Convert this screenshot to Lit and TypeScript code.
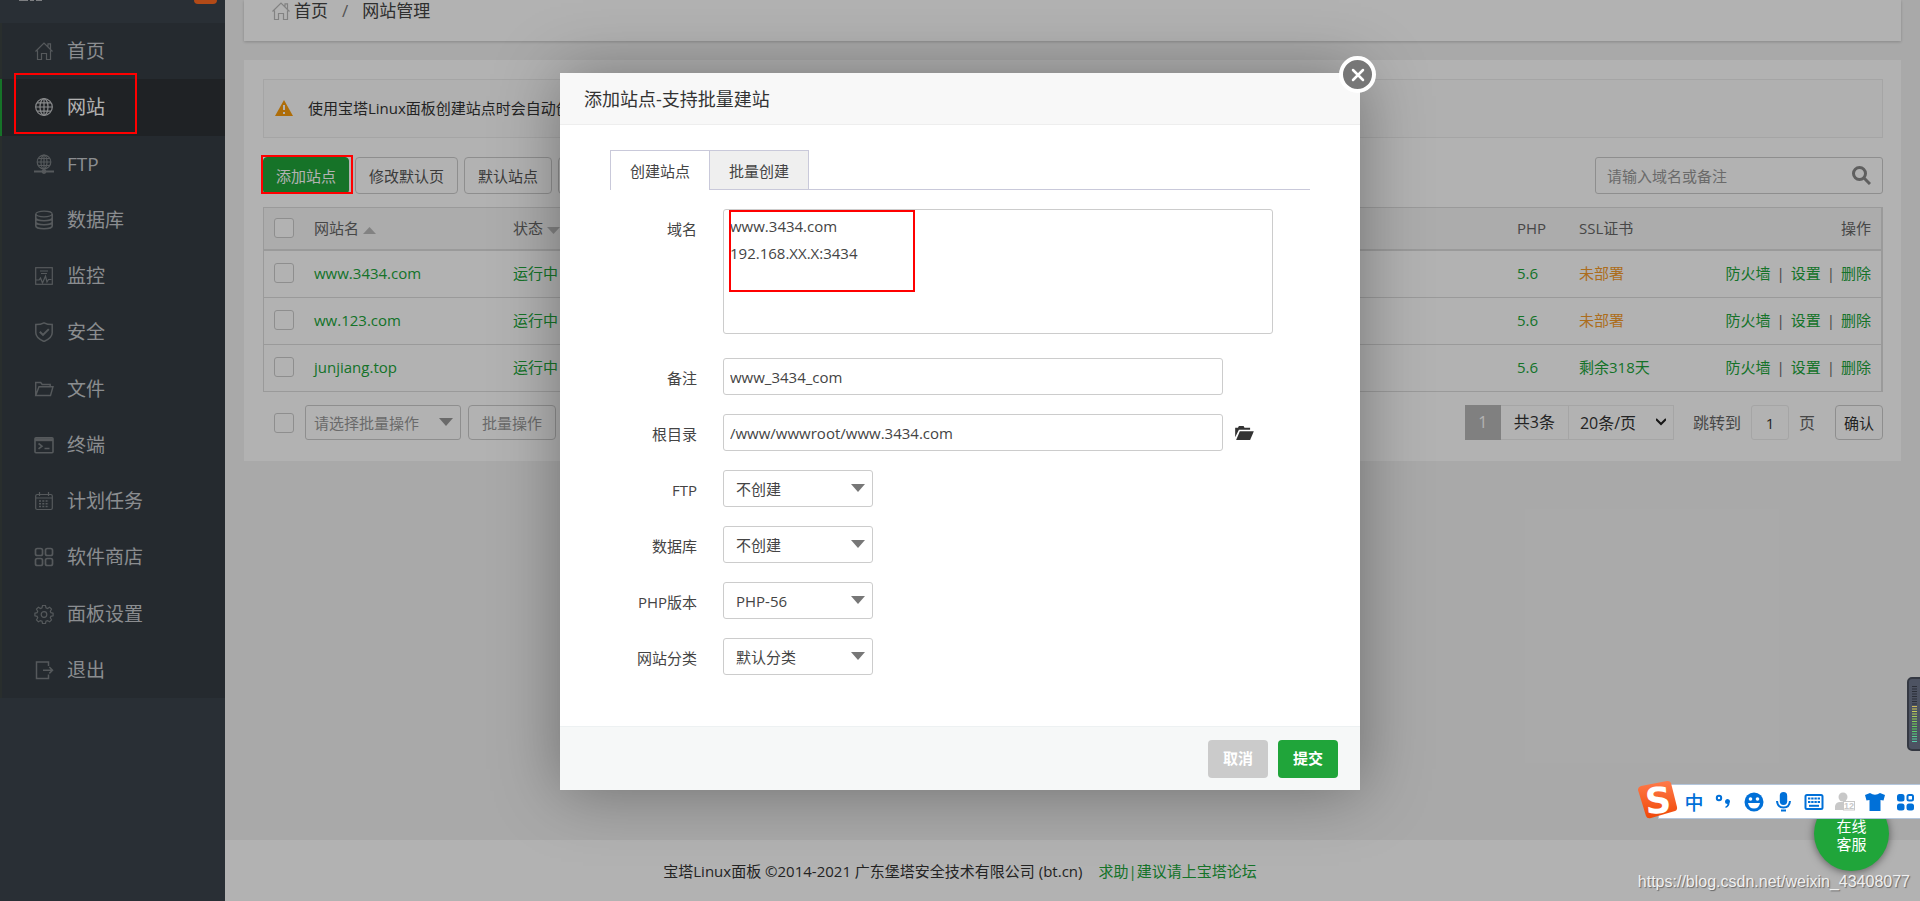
import { LitElement, html, svg, css } from "lit";
import { customElement, state } from "lit/decorators.js";
import { classMap } from "lit/directives/class-map.js";

const icons: Record<string, unknown> = {
  home: svg`<path d="M1.500 10.500 10 2l8.500 8.500M14 6V2.800h2.500V8.500M3.500 9.500v9h4v-6h5v6h4v-9"/>`,
  globe: svg`<circle cx="10" cy="10" r="8.300"/><ellipse cx="10" cy="10" rx="4" ry="8.300"/><path d="M10 1.700v16.600M1.700 10h16.600M3 5.800h14M3 14.200h14"/>`,
  ftp: svg`<circle cx="10" cy="8" r="6.800"/><ellipse cx="10" cy="8" rx="3" ry="6.800"/><path d="M10 1v14M3.200 8h13.600M4.500 4.500h11M4.500 11.500h11"/><path d="M0 17.500h20" stroke-width="2"/><circle cx="10" cy="17.500" r="1.800" fill="currentColor"/>`,
  database: svg`<ellipse cx="10" cy="4" rx="8.200" ry="2.800"/><path d="M1.800 4v12c0 1.600 3.600 2.800 8.200 2.800s8.200-1.200 8.200-2.800V4M1.800 8c0 1.600 3.600 2.800 8.200 2.800S18.200 9.600 18.200 8M1.800 12c0 1.600 3.600 2.800 8.200 2.800s8.200-1.200 8.200-2.800" stroke-width="1.600"/>`,
  monitor: svg`<rect x="1.700" y="1.700" width="16.600" height="16.600"/><path d="M6 5h8M7 7.500h6M2 14h3l1.500-2L8.500 17l3-7 1.500 6 1.500-2.500h3"/>`,
  shield: svg`<path d="M10 .8c2.500 1.400 5 1.800 8.200 1.800v8.200c0 4-3.600 6.700-8.200 8.700-4.600-2-8.200-4.700-8.200-8.700V2.600C5 2.600 7.500 2.200 10 .8z" stroke-width="1.500"/><path d="m5.800 9.700 3.200 3.200 5.800-5.800" stroke-width="2"/>`,
  folder: svg`<path d="M1.700 16.500V3.500h5l1.500 2h8v2.500M1.700 16.500 5 7.800h14l-2.500 8.700z" stroke-width="1.400"/>`,
  terminal: svg`<rect x="1" y="2.700" width="18" height="15" rx="1" stroke-width="1.600"/><path d="M1 4.700h18" stroke-width="3"/><path d="m4.500 8.500 3.500 2.700-3.500 2.700M10.500 13.500h5" stroke-width="1.600"/>`,
  calendar: svg`<rect x="1.700" y="3.500" width="16.600" height="15" rx="1.500"/><path d="M5.500 1v4M14.500 1v4M2 7h16"/><path d="M5 10h10M5 12.800h10M5 15.500h10" stroke-dasharray="2 1.300" stroke-width="1.600"/>`,
  apps: svg`<g stroke-width="1.700"><rect x="1.500" y="1.500" width="7" height="7" rx="1.800"/><rect x="11.500" y="1.500" width="7" height="7" rx="1.800"/><rect x="1.500" y="11.500" width="7" height="7" rx="1.800"/><rect x="11.500" y="11.500" width="7" height="7" rx="1.800"/></g>`,
  gear: svg`<path d="M8.500 1.500h3l.5 2.300 1.500.7 2.100-1.300 1.900 2-1.200 2 .6 1.500 2.200.5v2.600l-2.200.5-.6 1.500 1.200 2-1.900 2-2.100-1.200-1.500.6-.5 2.300h-3L8 17.200l-1.500-.6-2.100 1.200-1.900-2 1.200-2-.6-1.500-2.200-.5V9.200l2.200-.5.6-1.500-1.200-2 1.900-2 2.100 1.300L8 3.800z"/><circle cx="10" cy="10.500" r="2.800"/>`,
  exit: svg`<path d="M14.500 6V2H2.500v16.500h12v-4M9 10.200h9M15.300 7l3.200 3.200-3.200 3.200" stroke-width="1.500"/>`,
};

const icon = (name: string) =>
  html`<svg class="icon" viewBox="0 0 20 20" width="20" height="20" aria-hidden="true">${icons[name]}</svg>`;

const menu = [
  { icon: "home", label: "首页" },
  { icon: "globe", label: "网站" },
  { icon: "ftp", label: "FTP" },
  { icon: "database", label: "数据库" },
  { icon: "monitor", label: "监控" },
  { icon: "shield", label: "安全" },
  { icon: "folder", label: "文件" },
  { icon: "terminal", label: "终端" },
  { icon: "calendar", label: "计划任务" },
  { icon: "apps", label: "软件商店" },
  { icon: "gear", label: "面板设置" },
  { icon: "exit", label: "退出" },
];

const sites = [
  { name: "www.3434.com", php: "5.6", ssl: "未部署", secured: false },
  { name: "ww.123.com", php: "5.6", ssl: "未部署", secured: false },
  { name: "junjiang.top", php: "5.6", ssl: "剩余318天", secured: true },
];

const selects = [
  { id: "ftp", label: "FTP", value: "不创建" },
  { id: "db", label: "数据库", value: "不创建" },
  { id: "php", label: "PHP版本", value: "PHP-56" },
  { id: "type", label: "网站分类", value: "默认分类" },
];

const shared = css`
  * { box-sizing: border-box; }
  button, input, select, textarea { font: inherit; color: inherit; margin: 0; outline: none; }
  a { text-decoration: none; color: inherit; }
  .icon { fill: none; stroke: currentColor; stroke-width: 1.2; flex: none; }
  .select { position: relative; display: flex; }
  .select select { appearance: none; width: 100%; background: #fff; border: 1px solid #ccc; border-radius: 3px; }
  .select svg { position: absolute; right: 8px; top: 50%; margin-top: -5px; pointer-events: none; }
`;

@customElement("bt-sidebar")
export class BtSidebar extends LitElement {
  @state() private active = "网站";

  static styles = [shared, css`
    :host { display: flex; flex-direction: column; width: 225px; flex: none; background: #3c444d; color: #c8cbcf; font-size: 19px; }
    .top { display: flex; justify-content: space-between; height: 23px; padding: 0 8px 0 18px; }
    .top svg { display: block; }
    .badge { width: 23px; height: 4px; border-radius: 0 0 8px 8px; background: #ff6b22; }
    nav { display: flex; flex-direction: column; height: 675px; background: #353d44; }
    a { flex: 1; display: flex; align-items: center; gap: 13px; padding-left: 32px; border-left: 2px solid #3c4341; line-height: 28px; }
    .icon { color: #7b8084; }
    .active { background: #2d3136; border-left-color: #20a53a; color: #fff; }
    .active .icon { color: #c4c6c8; }
  `];

  render() {
    return html`
      <div class="top">
        <svg width="26" height="2" aria-hidden="true"><path d="M1 0h9v1H1zM12 0h4v1h-4zM18 0h6v1h-6z" fill="#b4b7ba"/></svg>
        <span class="badge"></span>
      </div>
      <nav>
        ${menu.map(m => html`<a href="#" class=${classMap({ active: m.label === this.active })}
          @click=${(e: Event) => { e.preventDefault(); this.active = m.label; }}>${icon(m.icon)}<span>${m.label}</span></a>`)}
      </nav>`;
  }
}

@customElement("bt-sites")
export class BtSites extends LitElement {
  static styles = [shared, css`
    :host { flex: 1; min-width: 0; display: flex; flex-direction: column; background: #f3f3f3; color: #666; font-size: 15px; line-height: 20px; }
    .crumbs { display: flex; align-items: center; height: 41px; margin: 0 19px; padding: 0 27px 20px; background: #fff; box-shadow: 0 1px 3px rgba(0, 0, 0, .2); font-size: 17px; color: #444; }
    .crumbs .icon { color: #bbb; margin-right: 3px; }
    .crumbs i { font-style: normal; margin: 0 14px; color: #777; }
    .card { margin: 19px; padding: 19px 18px 21px 19px; background: #fff; }
    .alert { display: flex; align-items: center; gap: 15px; height: 59px; padding: 0 11px 2px; border: 1px solid #ececec; background: #fcfcfc; color: #333; }
    .bar { display: flex; align-items: center; gap: 6px; margin-top: 19px; height: 37px; }
    .btn { height: 37px; padding: 0 13px; border: 1px solid #ccc; border-radius: 4px; background: #fff; color: #555; white-space: nowrap; }
    .primary { padding: 0 12px; background: #20a53a; border-color: #20a53a; color: #fff; }
    .search { display: flex; align-items: center; margin-left: auto; width: 288px; height: 37px; padding: 0 11px; border: 1px solid #ccc; border-radius: 3px; color: #8a8a8a; }
    .search input { flex: 1; min-width: 0; border: 0; padding: 0; background: none; }
    .search input::placeholder { color: #999; }
    .search button { display: flex; padding: 0; border: 0; background: none; }
    table { width: 100%; margin-top: 13px; table-layout: fixed; border: 1px solid #ddd; border-right-width: 2px; border-spacing: 0; }
    th, td { height: 47px; padding: 0 10px 2px; text-align: left; font-weight: 400; border-bottom: 1px solid #ddd; white-space: nowrap; }
    th { height: 43px; padding-bottom: 1px; background: #f6f6f6; border-bottom-width: 2px; }
    tbody tr:last-child td { border-bottom: 0; height: 46px; }
    .c-check { width: 40px; } .c-name { width: 199px; } .c-php { width: 62px; } .c-ssl { width: 108px; } .c-ops { width: 204px; }
    .right { text-align: right; }
    .right i { font-style: normal; margin: 0 6px; }
    .green { color: #20a53a; }
    .orange { color: #f79d2b; }
    input[type="checkbox"] { display: block; appearance: none; width: 20px; height: 20px; border: 1px solid #ccc; border-radius: 3px; background: #fff; }
    .foot { display: flex; align-items: center; height: 35px; margin-top: 13px; padding-left: 11px; }
    .foot .btn { height: 35px; color: #999; }
    .batch { width: 156px; margin: 0 7px 0 11px; color: #999; }
    .batch select { height: 35px; padding: 0 8px; }
    .pages { display: flex; align-items: center; margin-left: auto; color: #333; font-size: 16px; }
    .page { width: 36px; height: 35px; line-height: 35px; text-align: center; background: #b8b8b8; color: #fff; }
    .total { height: 35px; line-height: 33px; padding: 0 13px; border: 1px solid #ececec; border-left: 0; }
    .size { width: 106px; margin-left: -1px; }
    .size select { height: 35px; padding: 0 11px; border-color: #ececec; border-radius: 0; }
    .pages label { display: flex; align-items: center; gap: 10px; margin: 0 20px 0 19px; color: #666; }
    .pages label input { width: 38px; height: 35px; padding: 0; border: 1px solid #ececec; border-radius: 3px; text-align: center; font-size: 15px; color: #333; }
    .foot .ok { padding: 0 8px; color: #333; font-size: 15px; }
    footer { display: flex; justify-content: center; gap: 16px; margin-top: auto; height: 61px; padding: 21px 225px 0 0; background: #fff; color: #333; }
  `];

  render() {
    return html`
      <div class="crumbs">${icon("home")}<a href="#">首页</a><i>/</i><span>网站管理</span></div>
      <section class="card">
        <div class="alert">
          <svg width="18" height="16" viewBox="0 0 18 16" aria-hidden="true"><path d="M9 0l9 16H0z" fill="#fa9d0e"/><path d="M8 5h2v5H8zM8 12h2v2H8z" fill="#fff"/></svg>
          <span>使用宝塔Linux面板创建站点时会自动创建</span>
        </div>
        <div class="bar">
          <button class="btn primary">添加站点</button>
          <button class="btn">修改默认页</button>
          <button class="btn">默认站点</button>
          <button class="btn">分类管理</button>
          <div class="search">
            <input type="text" placeholder="请输入域名或备注" aria-label="请输入域名或备注">
            <button aria-label="搜索"><svg width="19" height="19" viewBox="0 0 19 19" fill="none" stroke="#888" stroke-width="3"><circle cx="7.500" cy="7.500" r="6"/><path d="M12 12l6 6"/></svg></button>
          </div>
        </div>
        <table>
          <colgroup><col class="c-check"><col class="c-name"><col><col class="c-php"><col class="c-ssl"><col class="c-ops"></colgroup>
          <thead><tr>
            <th><input type="checkbox" aria-label="全选"></th>
            <th>网站名 <svg width="13" height="7" aria-hidden="true"><path d="M0 7L6.500 0L13 7z" fill="#bbb"/></svg></th>
            <th>状态 <svg width="13" height="7" aria-hidden="true"><path d="M0 0h13L6.500 7z" fill="#bbb"/></svg></th>
            <th>PHP</th><th>SSL证书</th><th class="right">操作</th>
          </tr></thead>
          <tbody>
            ${sites.map(s => html`<tr>
              <td><input type="checkbox" aria-label=${s.name}></td>
              <td><a class="green" href="#">${s.name}</a></td>
              <td><a class="green" href="#">运行中</a></td>
              <td><a class="green" href="#">${s.php}</a></td>
              <td><a class=${s.secured ? "green" : "orange"} href="#">${s.ssl}</a></td>
              <td class="right"><a class="green" href="#">防火墙</a><i>|</i><a class="green" href="#">设置</a><i>|</i><a class="green" href="#">删除</a></td>
            </tr>`)}
          </tbody>
        </table>
        <div class="foot">
          <input type="checkbox" aria-label="全选">
          <span class="select batch"><select aria-label="批量操作"><option>请选择批量操作</option></select>
            <svg width="14" height="8" aria-hidden="true"><path d="M0 0h14L7 8z" fill="#999"/></svg></span>
          <button class="btn">批量操作</button>
          <div class="pages">
            <span class="page">1</span><span class="total">共3条</span>
            <span class="select size"><select aria-label="每页条数"><option>20条/页</option></select>
              <svg width="10" height="8" viewBox="0 0 10 8" fill="none" stroke="#222" stroke-width="2" aria-hidden="true"><path d="M0 1l5 5 5-5"/></svg></span>
            <label>跳转到<input type="text" value="1">页</label>
            <button class="btn ok">确认</button>
          </div>
        </div>
      </section>
      <footer><span>宝塔Linux面板 ©2014-2021 广东堡塔安全技术有限公司 (bt.cn)</span><a class="green" href="#">求助|建议请上宝塔论坛</a></footer>`;
  }
}

@customElement("bt-dialog")
export class BtDialog extends LitElement {
  static styles = [shared, css`
    :host { position: relative; display: block; width: 800px; background: #fff; color: #444; font-size: 15px; line-height: 20px; box-shadow: 1px 1px 62px rgba(0, 0, 0, .35); }
    h2 { margin: 0; height: 52px; padding: 0 24px; line-height: 53px; font-size: 18px; font-weight: 400; color: #333; background: #f8f8f8; border-bottom: 1px solid #eee; }
    .close { position: absolute; right: -16px; top: -17px; width: 37px; height: 37px; padding: 0; border: 4px solid #fff; border-radius: 50%; background: #777; display: grid; place-items: center; }
    .body { padding: 25px 50px 51px; }
    .tabs { display: flex; height: 40px; margin-bottom: 19px; border-bottom: 1px solid #c9c9da; }
    .tab { height: 39px; padding: 1px 19px 0; border: 1px solid #c9c9da; border-bottom: 0; background: #efefef; }
    .tab + .tab { border-left: 0; }
    .tab.on { height: 40px; background: #fff; }
    form { display: grid; gap: 19px; }
    .row { display: flex; align-items: center; gap: 26px; }
    .row > label { width: 87px; text-align: right; padding-top: 3px; }
    .row.first { align-items: flex-start; margin-bottom: 5px; }
    .row.first > label { padding-top: 10px; }
    .row input, textarea { border: 1px solid #ccc; border-radius: 3px; background: #fff; }
    textarea { width: 550px; height: 125px; padding: 3px 6px; line-height: 27px; resize: none; }
    .row input { width: 500px; height: 37px; padding: 0 6px; }
    .select { width: 150px; }
    .select select { height: 37px; padding: 0 12px; }
    .pick { margin-left: -14px; padding: 0; border: 0; background: none; display: flex; }
    .actions { display: flex; justify-content: flex-end; gap: 10px; height: 64px; padding: 13px 22px; border-top: 1px solid #edf1f2; background: #f6f8f8; }
    .actions button { width: 60px; height: 38px; padding: 0 0 3px; border: 0; border-radius: 4px; font-weight: 700; color: #fff; background: #cbcbcb; }
    .actions .submit { background: #20a53a; }
  `];

  render() {
    return html`
      <h2>添加站点-支持批量建站</h2>
      <button class="close" aria-label="关闭"><svg width="14" height="14" viewBox="0 0 14 14" stroke="#fff" stroke-width="2.500" stroke-linecap="round"><path d="M2 2l10 10M12 2L2 12"/></svg></button>
      <div class="body">
        <div class="tabs"><button class="tab on">创建站点</button><button class="tab">批量创建</button></div>
        <form>
          <div class="row first"><label for="domain">域名</label><textarea id="domain" .value=${"www.3434.com\n192.168.XX.X:3434"}></textarea></div>
          <div class="row"><label for="note">备注</label><input id="note" type="text" value="www_3434_com"></div>
          <div class="row"><label for="root">根目录</label><input id="root" type="text" value="/www/wwwroot/www.3434.com">
            <button class="pick" type="button" aria-label="选择目录"><svg width="19" height="14" viewBox="0 0 20 15" fill="#333"><path d="M0 12V2h3l1-2h5l1 2h6v2H4z"/><path d="M5 5.500h15L16 15H1z"/></svg></button></div>
          ${selects.map(s => html`<div class="row"><label for=${s.id}>${s.label}</label>
            <span class="select"><select id=${s.id}><option>${s.value}</option></select>
            <svg width="14" height="8" aria-hidden="true"><path d="M0 0h14L7 8z" fill="#777"/></svg></span></div>`)}
        </form>
      </div>
      <div class="actions"><button>取消</button><button class="submit">提交</button></div>`;
  }
}

@customElement("ime-bar")
export class ImeBar extends LitElement {
  static styles = css`
    :host { display: flex; align-items: center; height: 33px; background: #fff; border: 1px solid #b4c6dc; border-right: 0; color: #0070d8; }
    svg { flex: none; display: block; overflow: visible; fill: #0070d8; }
    .logo { margin: -6px 1px -1px -21px; }
    .mark { font: 700 36px "DejaVu Sans", sans-serif; fill: #fff; }
    .cn { width: 30px; text-align: center; font: 500 19px/30px "Noto Sans CJK SC", sans-serif; }
    .num { font: 700 9px "Liberation Sans", sans-serif; fill: #c8c8c8; }
    .line { fill: none; stroke: #0070d8; stroke-width: 2; }
    .dim { fill: #c8c8c8; }
    .white { fill: #fff; }
  `;

  render() {
    return html`
      <svg class="logo" width="40" height="39" viewBox="0 0 40 39" role="img" aria-label="S">
        <defs><linearGradient id="g" x2="0" y2="1"><stop stop-color="#ff7a4a"/><stop offset="1" stop-color="#f04808"/></linearGradient></defs>
        <path d="M3 6L29 1q3-.5 4 2l6 24q.5 3-2 4L13 38q-4 1-5-2L0 10q0-3 3-4z" fill="url(#g)"/>
        <text class="mark" x="7" y="33" transform="rotate(-4 20 20)">S</text>
      </svg>
      <span class="cn">中</span>
      <svg width="30" height="30" viewBox="0 0 30 30"><circle class="line" cx="10" cy="11" r="2.200"/><path d="M16 14.500a2.500 2.500 0 1 1 4.500 1.500q0 3.500-4 5v-1.500q1.800-1 2-2.500-2.500 0-2.500-2.500z"/></svg>
      <svg width="30" height="30" viewBox="0 0 30 30"><circle cx="15" cy="15" r="9.500"/><g class="white"><circle cx="11.500" cy="12" r="1.800"/><circle cx="18.500" cy="12" r="1.800"/><path d="M9 16h12q-1 5.500-6 5.500T9 16z"/></g></svg>
      <svg width="30" height="30" viewBox="0 0 30 30"><rect x="10.800" y="5" width="7.400" height="13" rx="3.700"/><path class="line" d="M8 14q.5 6.500 6.500 6.500T21 14"/><path d="M12 22.500h5v2h-5z"/></svg>
      <svg width="30" height="30" viewBox="0 0 30 30"><rect class="line" x="6.500" y="8" width="17" height="14" rx="1.500"/><path class="line" d="M9 11.500h12M9 15h12" stroke-dasharray="2.400 .8"/><path class="line" d="M10 18.800h10"/></svg>
      <svg width="31" height="30" viewBox="0 0 31 30"><circle class="dim" cx="14" cy="10" r="4.500"/><path class="dim" d="M6 23v-4q1-4 5-4h6q2 0 2 1h-5v7z"/><rect x="14.500" y="14.500" width="11" height="8.500" fill="#fff" stroke="#c8c8c8"/><text class="num" x="15" y="22">12</text></svg>
      <svg width="30" height="30" viewBox="0 0 30 30"><path d="M10 6q5 3.500 10 0l5 2-1.500 5.500-3-.5v11h-11V13l-3 .5L5 8z"/></svg>
      <svg width="30" height="30" viewBox="0 0 30 30"><rect x="7" y="7" width="7.500" height="7.500" rx="2.500"/><rect class="line" x="17.500" y="8" width="5.500" height="5.500" rx="1.500"/><rect x="7" y="16.500" width="7.500" height="7" rx="2.500"/><rect x="16.500" y="16.500" width="7.500" height="7" rx="2.500"/></svg>`;
  }
}

@customElement("app-root")
export class AppRoot extends LitElement {
  static styles = css`
    :host { position: relative; display: flex; min-height: 100vh; overflow: hidden; font-family: "Open Sans", "Noto Sans CJK SC", sans-serif; }
    .mask { position: absolute; inset: 0; background: rgba(0, 0, 0, .3); display: flex; justify-content: center; align-items: flex-start; padding-top: 73px; }
    .mark { position: absolute; border: 2px solid #f00; pointer-events: none; box-sizing: border-box; }
    .m-nav { left: 14px; top: 73px; width: 123px; height: 61px; }
    .m-add { left: 261px; top: 155px; width: 92px; height: 39px; }
    .frame { position: relative; }
    .m-domain { left: 169px; top: 137px; width: 186px; height: 82px; }
    .help { position: absolute; right: 31px; bottom: 30px; width: 75px; height: 75px; padding: 21px 20px 0; box-sizing: border-box; border-radius: 50%; background: #20a53a; color: #fff; font-size: 15px; line-height: 18px; text-align: center; text-decoration: none; box-shadow: 0 1px 8px rgba(0, 0, 0, .5); }
    ime-bar { position: absolute; right: 0; bottom: 82px; }
    .meter { position: absolute; right: 0; bottom: 150px; }
    .watermark { position: absolute; right: 10px; bottom: 9px; font: 16px/20px "Liberation Sans", sans-serif; color: #f0f0f0; text-shadow: 1px 1px 1px #666; }
  `;

  render() {
    const ticks = Array.from({ length: 23 }, (_, i) => i);
    return html`
      <bt-sidebar></bt-sidebar>
      <bt-sites></bt-sites>
      <div class="mask"><div class="frame"><bt-dialog></bt-dialog><span class="mark m-domain"></span></div></div>
      <span class="mark m-nav"></span>
      <span class="mark m-add"></span>
      <a class="help" href="#">在线客服</a>
      <svg class="meter" width="13" height="74" aria-hidden="true">
        <rect x="1" y="1" width="20" height="72" rx="4" fill="#4d5362" stroke="#343842" stroke-width="2"/>
        ${ticks.map(i => svg`<rect x="5" y=${9 + i * 5 / 2} width="5" height="1" fill=${i < 8 ? "#2b2f38" : `hsl(${50 + (i - 8) * 8}, 55%, 58%)`}/>`)}
      </svg>
      <ime-bar></ime-bar>
      <span class="watermark">https://blog.csdn.net/weixin_43408077</span>`;
  }
}
